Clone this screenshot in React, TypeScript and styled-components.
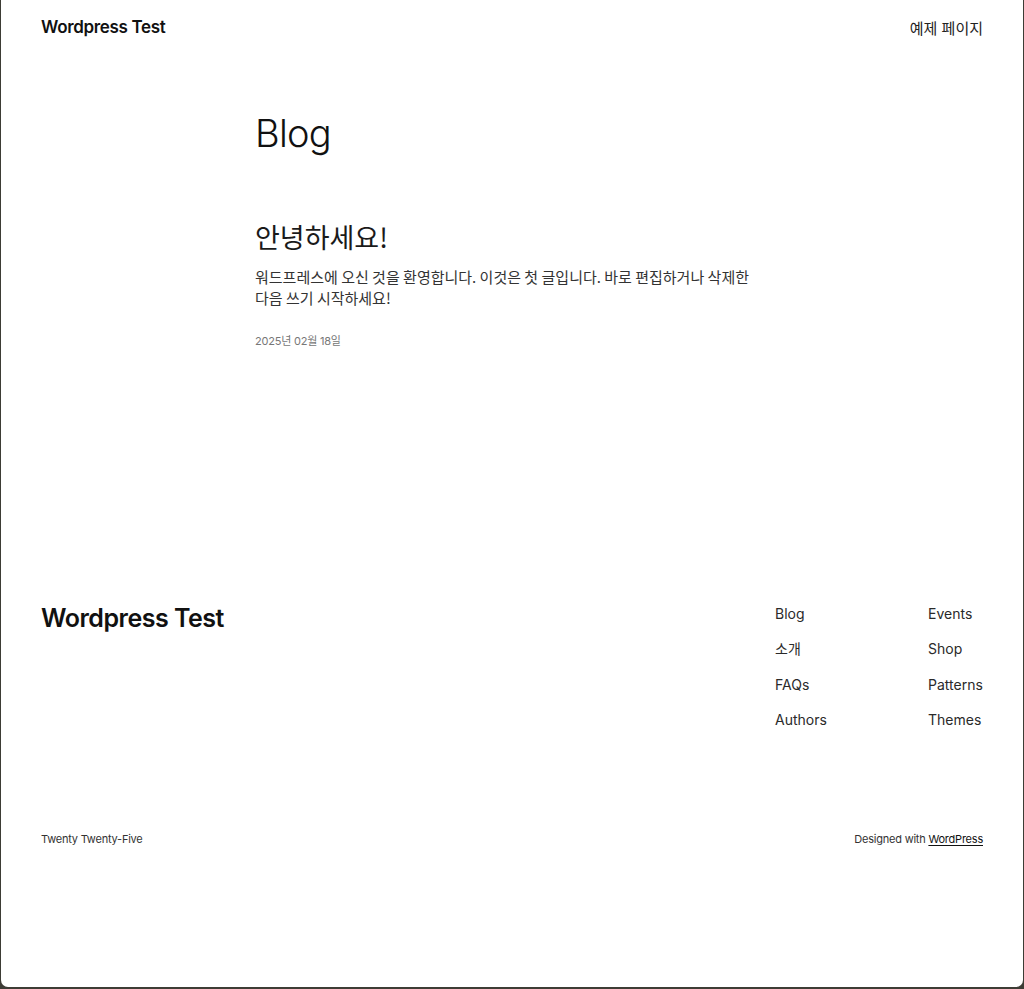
import React from "react";
import styled, { createGlobalStyle } from "styled-components";

const GlobalStyle = createGlobalStyle`
  html, body {
    margin: 0;
    padding: 0;
    background: #3d3c35;
  }
  body {
    font-family: Inter, "Noto Sans", "Noto Sans CJK KR", sans-serif;
    color: #111111;
  }
`;

const Frame = styled.div`
  margin-left: 1px;
  width: 1022px;
  min-height: 987px;
  background: #ffffff;
  border-radius: 0 0 7px 7px;
  display: flex;
  flex-direction: column;
`;

const Header = styled.header`
  height: 54px;
  padding: 0 40px;
  display: flex;
  align-items: center;
  justify-content: space-between;
`;

const SiteTitle = styled.a<{ $size: number }>`
  font-size: ${(p) => p.$size}px;
  font-weight: 600;
  letter-spacing: -0.02em;
  color: #111111;
  text-decoration: none;
`;

const NavLink = styled.a`
  font-family: Inter, "Noto Sans CJK KR", sans-serif;
  font-size: 15px;
  color: #222222;
  text-decoration: none;
`;

const Main = styled.main`
  width: 512px;
  margin-left: 254px;
  padding-top: 56px;
  min-height: 496px;
`;

const PageTitle = styled.h1`
  margin: 0;
  font-size: 38px;
  font-weight: 300;
  letter-spacing: -0.02em;
  line-height: 47px;
`;

const Post = styled.article`
  margin-top: 62px;
`;

const PostTitle = styled.h2`
  margin: 0;
  font-family: "Noto Sans CJK KR", sans-serif;
  font-size: 27px;
  font-weight: 400;
  line-height: 1.3;
  color: #1a1a1a;
`;

const Excerpt = styled.p`
  margin: 12px 0 0;
  font-family: "Noto Sans CJK KR", sans-serif;
  font-size: 15px;
  line-height: 21px;
  color: #333333;
  word-break: keep-all;
`;

const PostDate = styled.time`
  display: block;
  margin-top: 24px;
  font-size: 11px;
  letter-spacing: -0.02em;
  color: #777777;
  font-family: Inter, "Noto Sans CJK KR", sans-serif;
`;

const Footer = styled.footer`
  padding: 0 40px;
  display: flex;
  flex-direction: column;
`;

const FooterTop = styled.div`
  display: flex;
  justify-content: space-between;
  align-items: flex-start;
  margin-top: -3px;
`;

const FooterNav = styled.nav`
  display: grid;
  grid-template-columns: 153px 55px;
  row-gap: 14.3px;
`;

const FooterLink = styled.a`
  font-size: 14px;
  line-height: 21px;
  color: #2a2a2a;
  white-space: nowrap;
  text-decoration: none;
  font-family: Inter, "Noto Sans CJK KR", sans-serif;
`;

const FooterBottom = styled.div`
  margin-top: 102px;
  display: flex;
  justify-content: space-between;
  font-size: 11px;
  color: #333333;
  letter-spacing: -0.02em;
`;

const Credit = styled.span`
  a {
    color: #111111;
    text-decoration: underline;
    text-underline-offset: 2px;
  }
`;

const navItems = ["Blog", "Events", "소개", "Shop", "FAQs", "Patterns", "Authors", "Themes"];

export default function App() {
  return (
    <>
      <GlobalStyle />
      <Frame>
        <Header>
          <SiteTitle $size={17}>Wordpress Test</SiteTitle>
          <NavLink>예제 페이지</NavLink>
        </Header>
        <Main>
          <PageTitle>Blog</PageTitle>
          <Post>
            <PostTitle>안녕하세요!</PostTitle>
            <Excerpt>
              워드프레스에 오신 것을 환영합니다. 이것은 첫 글입니다. 바로 편집하거나 삭제한 다음 쓰기 시작하세요!
            </Excerpt>
            <PostDate>2025년 02월 18일</PostDate>
          </Post>
        </Main>
        <Footer>
          <FooterTop>
            <SiteTitle $size={25}>Wordpress Test</SiteTitle>
            <FooterNav>
              {navItems.map((item) => (
                <FooterLink key={item}>{item}</FooterLink>
              ))}
            </FooterNav>
          </FooterTop>
          <FooterBottom>
            <span>Twenty Twenty-Five</span>
            <Credit>
              Designed with <a>WordPress</a>
            </Credit>
          </FooterBottom>
        </Footer>
      </Frame>
    </>
  );
}
